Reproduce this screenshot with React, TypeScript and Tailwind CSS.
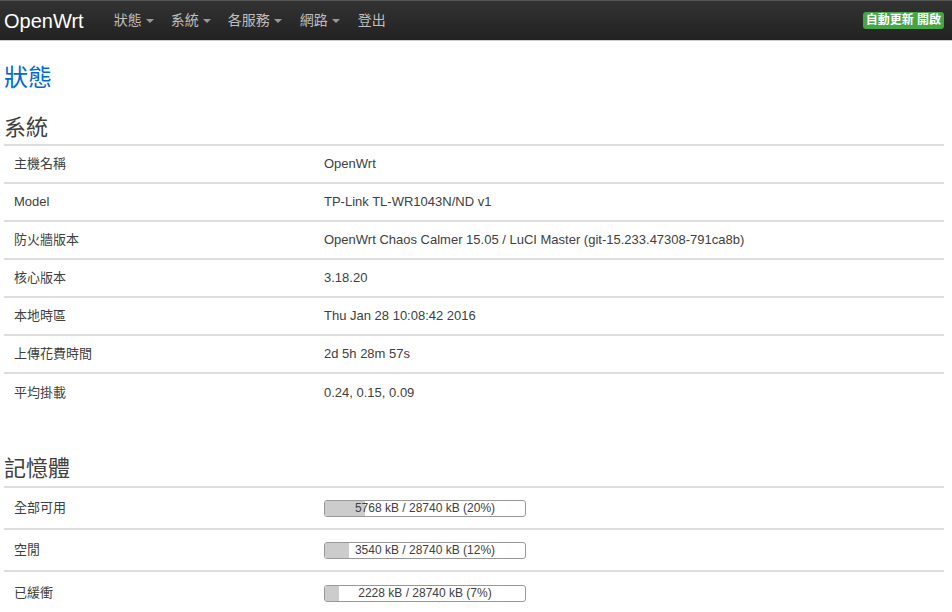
const font = { fontFamily: '"Liberation Sans", Arial, "Noto Sans CJK TC", sans-serif' };

const system: [string, string][] = [
  ["主機名稱", "OpenWrt"],
  ["Model", "TP-Link TL-WR1043N/ND v1"],
  ["防火牆版本", "OpenWrt Chaos Calmer 15.05 / LuCI Master (git-15.233.47308-791ca8b)"],
  ["核心版本", "3.18.20"],
  ["本地時區", "Thu Jan 28 10:08:42 2016"],
  ["上傳花費時間", "2d 5h 28m 57s"],
  ["平均掛載", "0.24, 0.15, 0.09"],
];

const memory: { label: string; used: number; pct: number }[] = [
  { label: "全部可用", used: 5768, pct: 20 },
  { label: "空閒", used: 3540, pct: 12 },
  { label: "已緩衝", used: 2228, pct: 7 },
];

function Caret() {
  return <span className="ml-1 inline-block h-0 w-0 border-x-[4px] border-t-[4px] border-x-transparent border-t-[#999] align-middle" />;
}

function Bar({ used, pct }: { used: number; pct: number }) {
  return (
    <div className="relative h-[17px] w-[202px] overflow-hidden rounded-[3px] border border-[#999] bg-white">
      <div className="absolute inset-y-0 left-0 bg-[#ccc]" style={{ width: `${pct}%` }} />
      <div className="relative text-center text-[12px] leading-[15px] text-[#404040]">
        {used} kB / 28740 kB ({pct}%)
      </div>
    </div>
  );
}

export default function App() {
  return (
    <div className="min-h-[612px] bg-white text-[#404040]" style={font}>
      <div className="flex h-[41px] items-center border-t border-t-[#555] border-b border-b-[#ccc] bg-gradient-to-b from-[#333] to-[#222] px-1">
        <div className="text-[20px] leading-none text-white">OpenWrt</div>
        <nav className="ml-[30px] flex items-center text-[14px] text-[#bfbfbf]">
          <span className="mr-[17px]">狀態<Caret /></span>
          <span className="mr-[17px]">系統<Caret /></span>
          <span className="mr-[18px]">各服務<Caret /></span>
          <span className="mr-[18px]">網路<Caret /></span>
          <span>登出</span>
        </nav>
        <div className="ml-auto mr-[4px] rounded-[3px] bg-[#46a546] px-[3px] text-[12px] font-bold leading-[17px] text-white">
          自動更新 開啟
        </div>
      </div>

      <div className="px-1">
        <h2 className="mt-[22px] text-[24px] leading-[30px] text-[#0069d6]">狀態</h2>

        <h3 className="mt-[21px] pb-[3px] text-[22px] leading-[27px] text-[#404040]">系統</h3>
        <div className="w-[940px] border-t-2 border-[#ddd]">
          {system.map(([k, v], i) => (
            <div
              key={k}
              className={`flex h-[38px] items-center text-[13px] ${i < system.length - 1 ? "border-b-2 border-[#ddd]" : ""}`}
            >
              <div className="w-[320px] pl-[10px]">{k}</div>
              <div>{v}</div>
            </div>
          ))}
        </div>

        <h3 className="mt-[43px] pb-[4px] text-[22px] leading-[27px] text-[#404040]">記憶體</h3>
        <div className="w-[940px] border-t-2 border-[#ddd]">
          {memory.map((m, i) => (
            <div
              key={m.label}
              className={`flex h-[42px] items-center text-[13px] ${i < memory.length - 1 ? "border-b-2 border-[#ddd]" : ""}`}
            >
              <div className="w-[320px] pl-[10px]">{m.label}</div>
              <Bar used={m.used} pct={m.pct} />
            </div>
          ))}
        </div>
      </div>
    </div>
  );
}
